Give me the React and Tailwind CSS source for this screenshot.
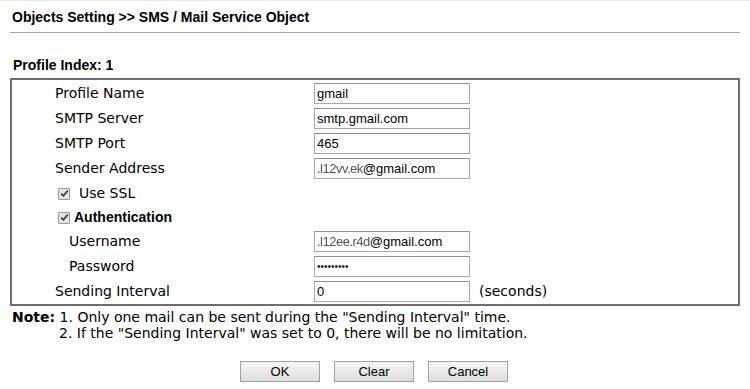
import React from "react";

const verdana = { fontFamily: '"DejaVu Sans", Verdana, sans-serif' };
const arial = { fontFamily: '"Liberation Sans", Arial, sans-serif' };

function Field({ children }) {
  return (
    <div
      className="w-[156px] h-[21px] border border-[#a9a9a9] border-t-[#8f8f8f] bg-white pl-[2px] flex items-center text-[13px] text-black whitespace-nowrap overflow-hidden"
      style={arial}
    >
      {children}
    </div>
  );
}

function Check() {
  return (
    <span className="inline-flex w-[12px] h-[12px] border border-[#9a9a9a] bg-[#e4e4e4] items-center justify-center rounded-[1px]">
      <svg width="9" height="9" viewBox="0 0 9 9">
        <path d="M1.2 4.6 L3.4 6.8 L7.8 1.6" fill="none" stroke="#3a3a3a" strokeWidth="1.7" />
      </svg>
    </span>
  );
}

function Row({ label, indent = 43, children, extra }) {
  return (
    <div className="flex items-center h-[25px]">
      <div className="w-[302px] text-[14px] text-black" style={{ paddingLeft: indent, ...verdana }}>
        {label}
      </div>
      {children}
      {extra}
    </div>
  );
}

function Blur({ text }) {
  return <span className="blur-[0.7px] text-[#555] tracking-[-0.5px]">{text}</span>;
}

function Button({ children }) {
  return (
    <button
      className="w-[80px] h-[21px] border border-[#a0a0a0] bg-gradient-to-b from-[#f6f6f6] to-[#dedede] text-[13px] text-black"
      style={arial}
    >
      {children}
    </button>
  );
}

export default function App() {
  return (
    <div className="w-[750px] h-[389px] bg-white border-t border-[#e8e8e8] text-black">
      <div
        className="mx-[10px] pt-[8px] pb-[7px] pl-[2px] border-b border-[#a6a6a6] text-[14px] leading-[16px] font-bold"
        style={arial}
      >
        Objects Setting &gt;&gt; SMS / Mail Service Object
      </div>

      <div className="ml-[13px] mt-[24px] text-[14px] leading-[16px] font-bold" style={arial}>
        Profile Index: 1
      </div>

      <div className="mx-[10px] mt-[5px] border-2 border-[#6e6e6e] pt-[1px]">
        <Row label="Profile Name">
          <Field>gmail</Field>
        </Row>
        <Row label="SMTP Server">
          <Field>smtp.gmail.com</Field>
        </Row>
        <Row label="SMTP Port">
          <Field>465</Field>
        </Row>
        <Row label="Sender Address">
          <Field>
            <Blur text=".l12vv.ek" />@gmail.com
          </Field>
        </Row>
        <div className="flex items-center h-[25px] pl-[46px] text-[14px]" style={verdana}>
          <Check />
          <span className="ml-[9px]">Use SSL</span>
        </div>
        <div className="flex items-center h-[23px] pl-[46px] text-[14px]">
          <Check />
          <span className="ml-[4px] font-bold" style={arial}>
            Authentication
          </span>
        </div>
        <Row label="Username" indent={57}>
          <Field>
            <Blur text=".l12ee.r4d" />@gmail.com
          </Field>
        </Row>
        <Row label="Password" indent={57}>
          <Field>
            <span className="text-[10px] text-[#222]">•••••••••</span>
          </Field>
        </Row>
        <Row
          label="Sending Interval"
          extra={
            <span className="ml-[9px] text-[14px]" style={verdana}>
              (seconds)
            </span>
          }
        >
          <Field>0</Field>
        </Row>
      </div>

      <div className="ml-[12px] mt-[3px] text-[14px] leading-[16px]" style={verdana}>
        <div>
          <span className="font-bold">Note:</span> 1. Only one mail can be sent during the "Sending Interval" time.
        </div>
        <div className="pl-[47px]">2. If the "Sending Interval" was set to 0, there will be no limitation.</div>
      </div>

      <div className="flex justify-center gap-[14px] mt-[20px] pr-[2px]">
        <Button>OK</Button>
        <Button>Clear</Button>
        <Button>Cancel</Button>
      </div>
    </div>
  );
}
